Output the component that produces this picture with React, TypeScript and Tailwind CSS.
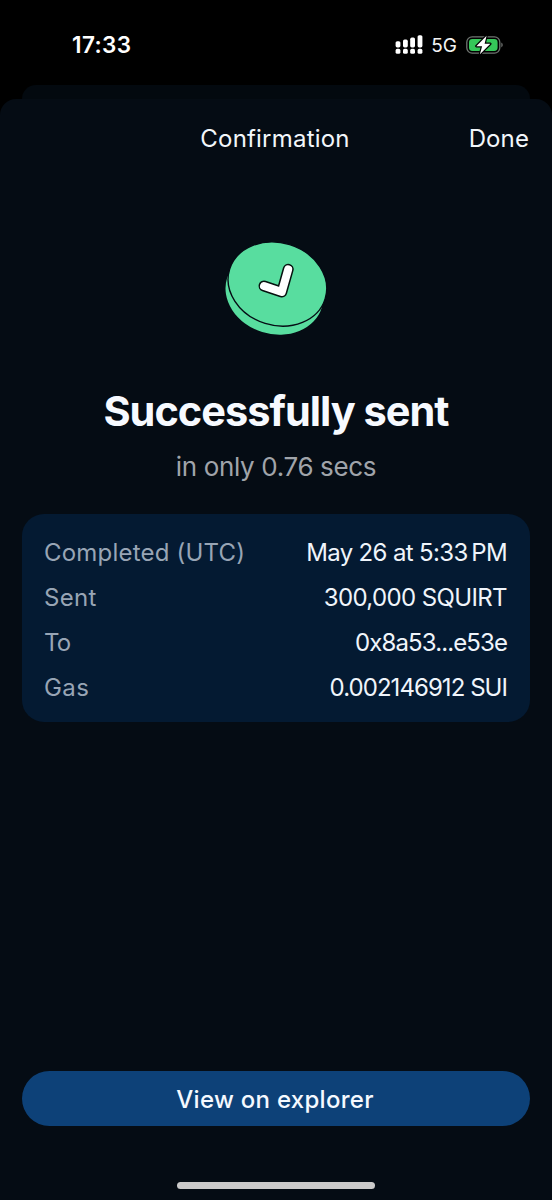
function StatusBar() {
  return (
    <div className="flex h-[85px] items-start justify-between pl-[72px] pr-[48px] pt-[33px]">
      <span className="text-[22.5px] font-semibold leading-6 tracking-[0.4px] text-white">17:33</span>
      <div className="flex h-6 items-center">
        <svg width="28" height="20" viewBox="0 0 28 20" fill="#fff">
          <rect x="0.6" y="6.2" width="4.8" height="6.2" rx="1.6" />
          <rect x="8" y="4.6" width="4.8" height="7.8" rx="1.6" />
          <rect x="15.2" y="2.6" width="4.8" height="9.8" rx="1.6" />
          <rect x="22.6" y="0.2" width="4.8" height="12.2" rx="1.6" />
          <rect x="0.6" y="13.8" width="4.8" height="5" rx="1.6" />
          <rect x="8" y="13.8" width="4.8" height="5" rx="1.6" />
          <rect x="15.2" y="13.8" width="4.8" height="5" rx="1.6" />
          <rect x="22.6" y="13.8" width="4.8" height="5" rx="1.6" />
        </svg>
        <span className="ml-[8px] pt-px text-[19px] leading-6 text-[#f4f4f4]">5G</span>
        <svg className="ml-[9px]" width="38" height="22" viewBox="0 0 38 22">
          <rect x="0.8" y="2.8" width="33" height="16.4" rx="5.4" fill="none" stroke="#6f7571" strokeWidth="1.3" />
          <rect x="3" y="5" width="28.6" height="12" rx="3.4" fill="#35c759" />
          <path d="M35.4 8.6c1.7.8 1.7 4 0 4.8z" fill="#7b7f7c" />
          <path d="M20.6 1.8 10.3 12.2h5.8l-2.2 8 10.5-10.4h-5.8z" fill="#fff" stroke="#000" strokeWidth="2.4" strokeLinejoin="round" paintOrder="stroke" />
        </svg>
      </div>
    </div>
  );
}

function SuccessCoin() {
  return (
    <svg className="mr-[2px]" width="130" height="115" viewBox="0 0 130 115">
      <ellipse cx="64.4" cy="62.9" rx="49.6" ry="41" transform="rotate(17.3 64.4 62.9)" fill="#58dd9f" />
      <ellipse cx="67.4" cy="54" rx="50" ry="41.3" transform="rotate(17.3 67.4 54)" fill="#58dd9f" stroke="#050c14" strokeWidth="1.4" />
      <path d="M78.2 39.3 71.8 62 54 56" fill="none" stroke="#06120f" strokeWidth="11" strokeLinecap="round" strokeLinejoin="round" />
      <path d="M78.2 39.3 71.8 62 54 56" fill="none" stroke="#fff" strokeWidth="8" strokeLinecap="round" strokeLinejoin="round" />
    </svg>
  );
}

const rows = [
  { label: "Completed (UTC)", value: "May 26 at 5:33\u2009PM", lt: "tracking-[0.2px]", vt: "tracking-[-0.65px]" },
  { label: "Sent", value: "300,000 SQUIRT", lt: "tracking-[0.3px]", vt: "tracking-[-0.62px]" },
  { label: "To", value: "0x8a53...e53e", lt: "tracking-[-0.9px]", vt: "tracking-[-0.9px]" },
  { label: "Gas", value: "0.002146912 SUI", lt: "tracking-[0.4px]", vt: "tracking-[-0.95px]" },
];

export default function App() {
  return (
    <div className="flex h-[1200px] w-[552px] flex-col overflow-hidden whitespace-nowrap bg-black font-['Inter',sans-serif]">
      <StatusBar />
      <div className="mx-[22px] h-[14px] shrink-0 rounded-t-[14px] bg-[#03090f]" />
      <main className="flex grow flex-col rounded-t-[16px] bg-[#050c14]">
        <header className="grid h-20 grid-cols-[1fr_auto_1fr] items-center px-[23px] text-2xl text-[#f3f7fb]">
          <h1 className="col-start-2 pr-[2px]">
            <span className="tracking-[0.2px]">Confirmation</span>
          </h1>
          <button className="justify-self-end">
            <span className="tracking-[0.1px]">Done</span>
          </button>
        </header>
        <section className="flex flex-col items-center pt-[51px]">
          <SuccessCoin />
          <h2 className="mt-[41px] text-[41.5px] font-bold leading-[50px] tracking-[-1px] text-[#f7faff]">Successfully sent</h2>
          <p className="mt-[15px] text-[26px] leading-8 tracking-[-0.35px] text-[#a0a4aa]">in only 0.76 secs</p>
        </section>
        <dl className="mx-[22px] mt-[31px] flex h-[208px] flex-col rounded-[22px] bg-[#041a32] pl-[22px] pr-[23px] pt-[16px] text-2xl">
          {rows.map((r) => (
            <div key={r.label} className="flex h-[45px] items-center justify-between">
              <dt className={"text-[#98a5b5] " + r.lt}>{r.label}</dt>
              <dd className={"text-[#f0f5fb] " + r.vt}>{r.value}</dd>
            </div>
          ))}
        </dl>
        <div className="mt-auto flex flex-col items-center px-[22px] pb-[11px]">
          <button className="h-[55px] w-full rounded-full bg-[#0d4178] pr-[2px] pt-[2px] text-2xl font-medium text-[#f5f9ff]">
            <span className="tracking-[0.28px]">View on explorer</span>
          </button>
          <div className="mt-[56px] h-[7px] w-[198px] rounded-full bg-[#cbcaca]" />
        </div>
      </main>
    </div>
  );
}
